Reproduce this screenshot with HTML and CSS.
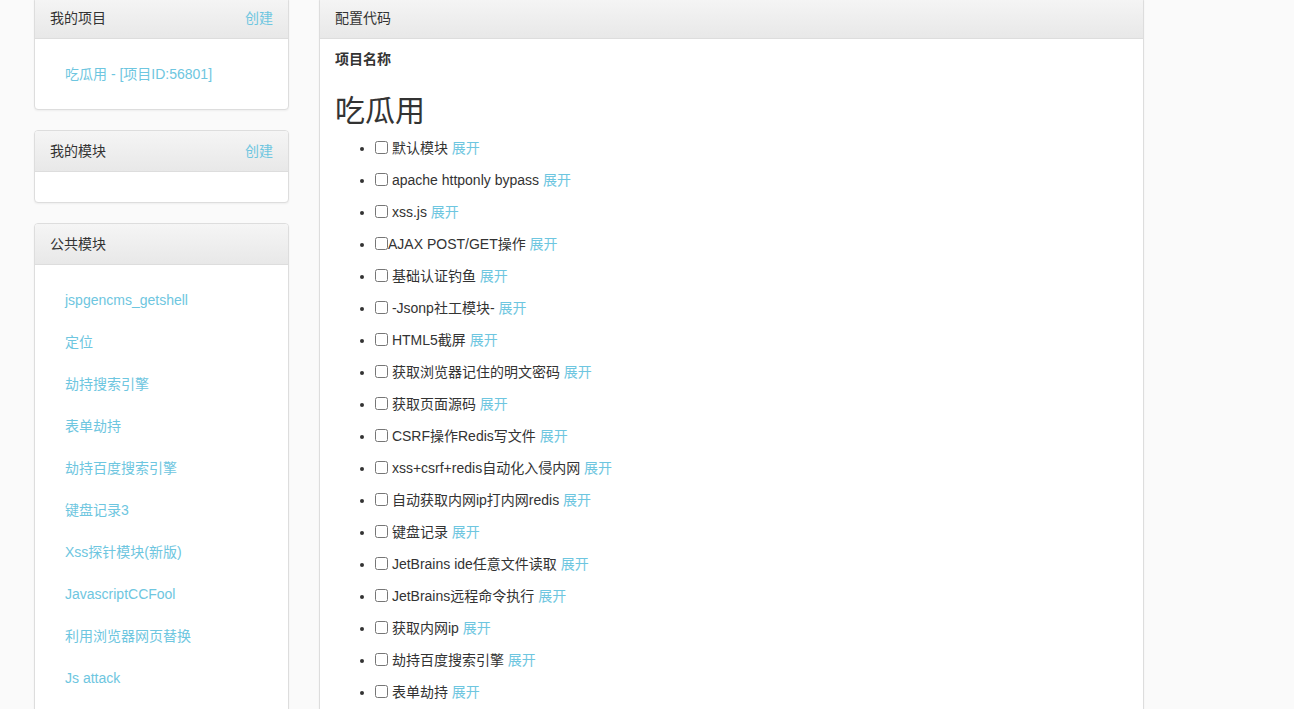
FILE: index.html
```html
<!DOCTYPE html>
<html lang="zh-CN">
  <head>
    <meta charset="UTF-8" />
    <meta name="viewport" content="width=device-width, initial-scale=1.0" />
    <title>配置代码</title>
    <link rel="stylesheet" href="styles.css">
  </head>
  <body>
    <div class="wrapper">
      <!-- 左侧栏 -->
      <aside class="sidebar">
        <div class="panel">
          <div class="panel-heading">
            <span>我的项目</span>
            <a href="#">创建</a>
          </div>
          <div class="panel-body">
            <ul class="nav">
              <li><a href="#">吃瓜用 - [项目ID:56801]</a></li>
            </ul>
          </div>
        </div>

        <div class="panel">
          <div class="panel-heading">
            <span>我的模块</span>
            <a href="#">创建</a>
          </div>
          <div class="panel-body"></div>
        </div>

        <div class="panel">
          <div class="panel-heading">
            <span>公共模块</span>
          </div>
          <div class="panel-body">
            <ul class="nav">
              <li><a href="#">jspgencms_getshell</a></li>
              <li><a href="#">定位</a></li>
              <li><a href="#">劫持搜索引擎</a></li>
              <li><a href="#">表单劫持</a></li>
              <li><a href="#">劫持百度搜索引擎</a></li>
              <li><a href="#">键盘记录3</a></li>
              <li><a href="#">Xss探针模块(新版)</a></li>
              <li><a href="#">JavascriptCCFool</a></li>
              <li><a href="#">利用浏览器网页替换</a></li>
              <li><a href="#">Js attack</a></li>
            </ul>
          </div>
        </div>
      </aside>

      <!-- 主内容 -->
      <main class="content">
        <div class="panel">
          <div class="panel-heading">
            <span>配置代码</span>
          </div>
          <div class="panel-body main-body">
            <label class="field-label">项目名称</label>
            <h2>吃瓜用</h2>
            <ul class="module-list">
              <li><input type="checkbox" /> 默认模块 <a href="#">展开</a></li>
              <li><input type="checkbox" /> apache httponly bypass <a href="#">展开</a></li>
              <li><input type="checkbox" /> xss.js <a href="#">展开</a></li>
              <li><input type="checkbox" />AJAX POST/GET操作 <a href="#">展开</a></li>
              <li><input type="checkbox" /> 基础认证钓鱼 <a href="#">展开</a></li>
              <li><input type="checkbox" /> -Jsonp社工模块- <a href="#">展开</a></li>
              <li><input type="checkbox" /> HTML5截屏 <a href="#">展开</a></li>
              <li><input type="checkbox" /> 获取浏览器记住的明文密码 <a href="#">展开</a></li>
              <li><input type="checkbox" /> 获取页面源码 <a href="#">展开</a></li>
              <li><input type="checkbox" /> CSRF操作Redis写文件 <a href="#">展开</a></li>
              <li><input type="checkbox" /> xss+csrf+redis自动化入侵内网 <a href="#">展开</a></li>
              <li><input type="checkbox" /> 自动获取内网ip打内网redis <a href="#">展开</a></li>
              <li><input type="checkbox" /> 键盘记录 <a href="#">展开</a></li>
              <li><input type="checkbox" /> JetBrains ide任意文件读取 <a href="#">展开</a></li>
              <li><input type="checkbox" /> JetBrains远程命令执行 <a href="#">展开</a></li>
              <li><input type="checkbox" /> 获取内网ip <a href="#">展开</a></li>
              <li><input type="checkbox" /> 劫持百度搜索引擎 <a href="#">展开</a></li>
              <li><input type="checkbox" /> 表单劫持 <a href="#">展开</a></li>
            </ul>
          </div>
        </div>
      </main>
    </div>
  </body>
</html>
```

FILE: styles.css
```css
:root {
  --text: #333;
  --link: #6ec6e0;
  --border: #ddd;
  --page: #fafafa;
}

html,
body {
  height: 100%;
}

body {
  font-family: 'Liberation Sans', 'Noto Sans CJK SC', sans-serif;
  font-size: 14px;
  line-height: 20px;
  color: var(--text);
  background-color: var(--page);
  margin: 0;
  overflow: hidden;
}

a {
  color: var(--link);
  text-decoration: none;
}

ul {
  margin: 0;
}

.wrapper {
  display: flex;
  align-items: flex-start;
  gap: 30px;
  padding-left: 34px;
  margin-top: -3px;
}

.sidebar {
  width: 255px;
  flex: none;
}

.content {
  width: 825px;
  flex: none;
}

.panel {
  background: #fff;
  border: 1px solid var(--border);
  border-radius: 4px;
  box-shadow: 0 1px 2px rgba(0, 0, 0, 0.05);
  margin-bottom: 20px;
}

.panel-heading {
  display: flex;
  justify-content: space-between;
  padding: 10px 15px;
  background-image: linear-gradient(to bottom, #f5f5f5 0, #e8e8e8 100%);
  border-bottom: 1px solid var(--border);
  border-radius: 3px 3px 0 0;
}

.panel-body {
  padding: 15px;
}

.nav {
  list-style: none;
  padding: 0;
}

.nav li + li {
  margin-top: 2px;
}

.nav a {
  display: block;
  padding: 10px 15px;
}

.sidebar .panel:last-child {
  min-height: 760px;
}

.content .panel {
  min-height: 760px;
}

.main-body {
  padding-top: 10px;
}

.field-label {
  display: block;
  font-weight: bold;
}

h2 {
  font-size: 30px;
  font-weight: normal;
  line-height: 33px;
  margin: 25px 0 11px;
}

.module-list {
  padding-left: 40px;
}

.module-list li {
  margin-bottom: 12px;
}

.module-list input {
  margin: 0;
  width: 13px;
  height: 13px;
  vertical-align: -1px;
}
```
